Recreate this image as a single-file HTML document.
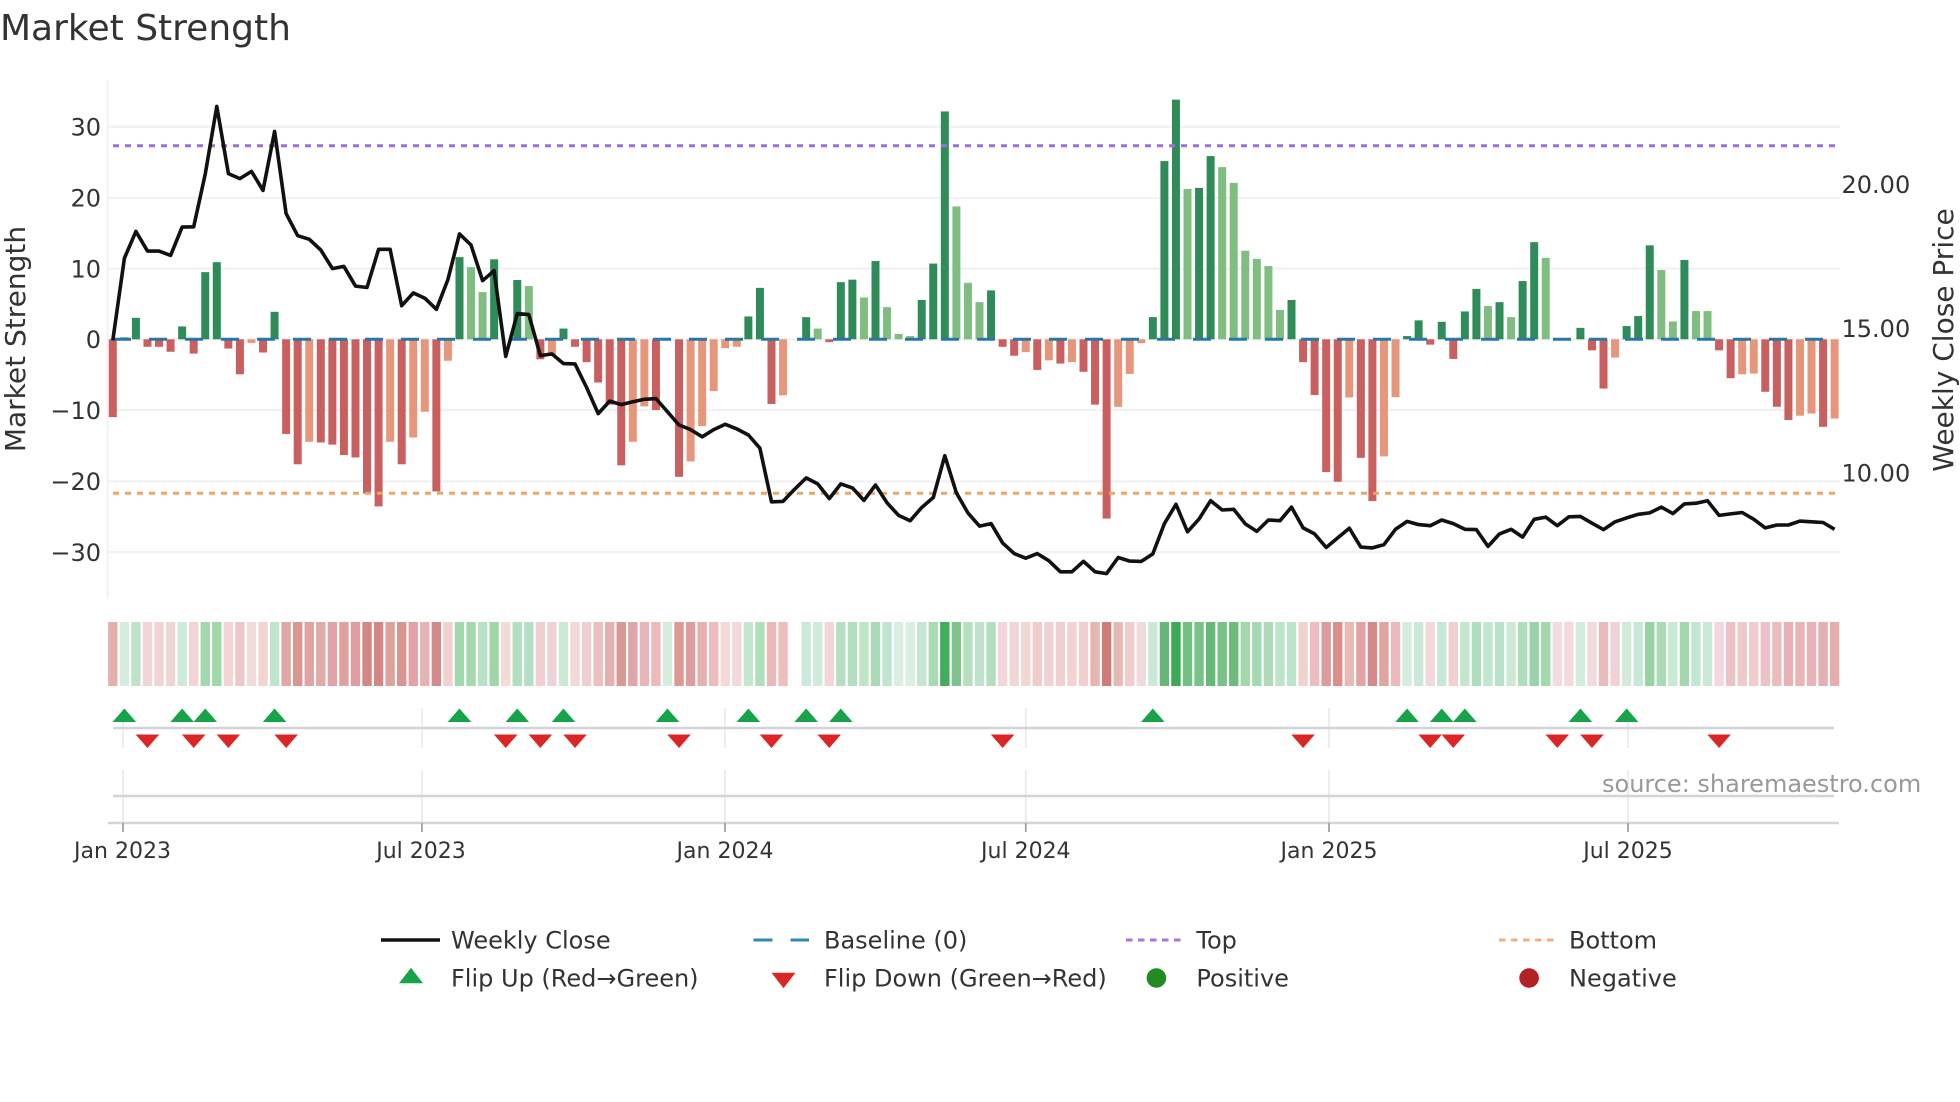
<!DOCTYPE html>
<html>
<head>
<meta charset="utf-8">
<title>Market Strength</title>
<style>
html,body{margin:0;padding:0;background:#fff;width:1960px;height:1102px;overflow:hidden}
svg{display:block}
text{font-family:"DejaVu Sans","Liberation Sans",sans-serif;fill:#333}
</style>
</head>
<body>
<svg id="c" xmlns="http://www.w3.org/2000/svg" width="1960" height="1102" viewBox="0 0 1960 1102">
<rect width="1960" height="1102" fill="#fff"/>
<g id="grid" stroke="#f0f2f5" stroke-width="2.4">
<line x1="108" x2="1840" y1="126.8" y2="126.8"/>
<line x1="108" x2="1840" y1="197.9" y2="197.9"/>
<line x1="108" x2="1840" y1="268.6" y2="268.6"/>
<line x1="108" x2="1840" y1="339.3" y2="339.3"/>
<line x1="108" x2="1840" y1="410" y2="410"/>
<line x1="108" x2="1840" y1="481.4" y2="481.4"/>
<line x1="108" x2="1840" y1="552.1" y2="552.1"/>
</g>
<line x1="107.5" x2="107.5" y1="80" y2="599" stroke="#eff1f4" stroke-width="1.8"/>
<g id="bars"></g>
<line x1="113" x2="1835" y1="339.3" y2="339.3" stroke="#2877a6" stroke-width="3" stroke-dasharray="18 18"/>
<line x1="113" x2="1835" y1="145.7" y2="145.7" stroke="#9d6fdb" stroke-width="3" stroke-dasharray="6 6"/>
<line x1="113" x2="1835" y1="493.2" y2="493.2" stroke="#eca564" stroke-width="3" stroke-dasharray="6 6"/>
<polyline id="close" fill="none" stroke="#111" stroke-width="3.6" stroke-linejoin="round"/>
<g id="heat"></g>
<g stroke="#e9ebef" stroke-width="1.8">
<path d="M123 708V748M123 770V823M421.9 708V748M421.9 770V823M725 708V748M725 770V823M1025.8 708V748M1025.8 770V823M1329 708V748M1329 770V823M1628 708V748M1628 770V823"/>
</g>
<g stroke="#d2d4d9" stroke-width="2.4">
<line x1="113" x2="1834" y1="728" y2="728"/>
<line x1="113" x2="1834" y1="796" y2="796"/>
<line x1="108" x2="1839" y1="823" y2="823"/>
</g>
<path d="M123 823V832M421.9 823V832M725 823V832M1025.8 823V832M1329 823V832M1628 823V832" stroke="#a0a2a6" stroke-width="1.8"/>
<g id="flips"></g>

<text x="0" y="40" font-size="36">Market Strength</text>
<g font-size="24" text-anchor="end">
<text x="101" y="135.7">30</text>
<text x="101" y="206.7">20</text>
<text x="101" y="277.4">10</text>
<text x="101" y="347.9">0</text>
<text x="101" y="418.8">−10</text>
<text x="101" y="490">−20</text>
<text x="101" y="560.9">−30</text>
</g>
<g font-size="24">
<text x="1841.5" y="193">20.00</text>
<text x="1841.5" y="337">15.00</text>
<text x="1841.5" y="481.5">10.00</text>
</g>
<text transform="translate(25 339) rotate(-90)" font-size="28" text-anchor="middle">Market Strength</text>
<text transform="translate(1953 340) rotate(-90)" font-size="28" text-anchor="middle">Weekly Close Price</text>
<g font-size="22" text-anchor="middle">
<text x="122.5" y="858">Jan 2023</text>
<text x="421" y="858">Jul 2023</text>
<text x="725" y="858">Jan 2024</text>
<text x="1025.8" y="858">Jul 2024</text>
<text x="1329" y="858">Jan 2025</text>
<text x="1628" y="858">Jul 2025</text>
</g>
<text x="1602" y="792" font-size="24" style="fill:#999">source: sharemaestro.com</text>

<line x1="381" x2="440" y1="940" y2="940" stroke="#111" stroke-width="3.6"/>
<line x1="753.5" x2="809" y1="940" y2="940" stroke="#3386b8" stroke-width="3" stroke-dasharray="19 18"/>
<line x1="1126" x2="1182" y1="940" y2="940" stroke="#a874e0" stroke-width="3" stroke-dasharray="6.5 5.5"/>
<line x1="1499" x2="1555" y1="940" y2="940" stroke="#eeb084" stroke-width="3" stroke-dasharray="6.5 5.5"/>
<polygon points="399,983.3 411,967.7 423,983.3" fill="#16a34a"/>
<polygon points="771.5,972.7 795.5,972.7 783.5,988.3" fill="#dc2626"/>
<circle cx="1156.4" cy="978" r="9.8" fill="#228b22"/>
<circle cx="1529.1" cy="978" r="9.8" fill="#b22222"/>
<g font-size="24">
<text x="451" y="948.3">Weekly Close</text>
<text x="824" y="948.3">Baseline (0)</text>
<text x="1196.4" y="948.3">Top</text>
<text x="1569" y="948.3">Bottom</text>
<text x="451" y="986.5">Flip Up (Red→Green)</text>
<text x="824" y="986.5">Flip Down (Green→Red)</text>
<text x="1196.4" y="986.5">Positive</text>
<text x="1569" y="986.5">Negative</text>
</g>
</svg>
<script>
(function(){
var NS="http://www.w3.org/2000/svg";
function X(i){return 112.8+i*11.556}
function Y(z){return 60+z/2.8}
function el(p,n,a){var e=document.createElementNS(NS,n);for(var k in a)e.setAttribute(k,a[k]);p.appendChild(e);return e}
var bars="1000R 776g 722G 803R 803R 817R 746G 822R 594G 566G 808R 880R 792r 819R 705G 1047R 1132R 1069r 1071R 1077R 1106R 1113R 1214R 1250R 1069r 1132R 1057r 985r 1208R 842r 552G 580g 650g 558G 0 616G 633g 838R 825r 752G 803R 846R 903R 965R 1135R 1069r 970r 980R 0 1167R 1124r 1025r 927r 807r 803r 718G 638G 963R 939r 0 720G 752g 790R 622G 615G 665g 563G 692g 767g 773g 672G 570G 144G 410g 624g 678g 645G 803R 828R 818r 868R 841r 850R 846r 873R 965R 1284R 971r 879r 793r 720G 283G 111G 361g 358G 269G 300g 344g 534g 557g 577g 700g 672G 846R 938R 1154R 1181R 945r 1114R 1235R 1110r 944r 773G 729G 797R 733G 837R 704G 641G 689g 678G 720g 619G 510G 554g 0 0 750G 813R 920R 833r 745G 717G 519G 588g 732g 560G 703g 703g 813R 891R 880r 878r 929R 971R 1008R 996r 990r 1027R 1004r".split(" ");
var col={G:"#2f8c58",g:"#80bd80",R:"#c95f5f",r:"#e6967a"};
var g=document.getElementById("bars");
var Y0=339.3;
bars.forEach(function(b,i){
  var z=parseFloat(b);if(!z)return;
  var y=Y(z),t=Math.min(y,Y0),h=Math.abs(y-Y0);
  el(g,"rect",{x:(X(i)-4).toFixed(2),y:t.toFixed(2),width:8,height:h.toFixed(2),fill:col[b.slice(-1)]});
});
var line=[785,555,480,535,535,547,468,467,320,130,318,332,312,365,200,430,492,502,532,584,578,633,637,530,530,688,652,667,698,615,487,518,618,590,830,710,713,828,823,850,851,917,990,955,965,957,950,948,985,1022,1035,1055,1035,1020,1033,1050,1087,1237,1236,1202,1170,1187,1228,1187,1198,1233,1190,1240,1275,1290,1253,1225,1108,1212,1268,1305,1298,1352,1382,1395,1382,1402,1433,1433,1404,1433,1438,1393,1403,1404,1383,1298,1244,1321,1285,1234,1260,1258,1299,1320,1288,1290,1252,1310,1327,1365,1338,1311,1364,1366,1357,1314,1292,1301,1304,1288,1298,1314,1315,1362,1327,1314,1336,1286,1280,1304,1279,1278,1297,1315,1293,1282,1272,1268,1252,1270,1243,1241,1234,1275,1271,1267,1286,1310,1302,1302,1291,1293,1295,1314];
document.getElementById("close").setAttribute("points",line.map(function(z,i){return X(i).toFixed(1)+","+Y(z).toFixed(1)}).join(" "));
var heat="e3b0ac d5ecdf bfe3c9 f3d4d6 f1d3d4 efd6d3 cdebd9 f3d3d6 a3d7b0 a0d8a6 f4d4d4 ecc9c8 f1dcdc f1d5d3 bfe5cd e0a7a5 d89791 dfa5a5 e0aaa6 e1a3a9 dea19e e09e9f d28783 d38783 dfa19b d99590 e3a2a7 e6b3b4 d48a8c f2d0ce a3d9ae a6d8ae b8e2c8 a1d7a5 f3dbd7 b0e0bf b3e0c4 f0cfd2 eed3d6 cce9d4 f3d8d8 efcfd4 ecbfbe e5b0b2 da9893 e0a5a9 e8b6b8 ebbab9 d5ecdf dd9a95 de9c9f e7b0af eebcbc f3d9d7 f1d9dc c4e6cf b0dfbb ebb8bb ebbfbc - cbe9d9 d0ebdc f4d6d8 b5dfc0 b2dfbf bfe5c6 acdab9 c0e5ce d7eee0 d9efe0 c4e7d1 a9dab3 42ad5a 80c38c b6dfc0 bfe3cd b2dfbe f1d6dc f0d7d5 f0d7d0 f1ccca f0d0d0 f1cfd0 f2d3d3 f1cfd0 e6b5ae cf7b78 e8b9b2 f0cccc efdbdd cce8d7 65b877 3ca957 72c082 79c288 66b974 78c288 6dbc7c a3d8ad a5d9b3 aedab7 bfe5c9 bde5cc f2d2cf edbcbe dd9c9b db8f8a e8bab6 e3a3a5 d58a88 e2a49f ecbabc d6ecdf cae9d8 f2d8da c8e8d7 f2d0d2 c4e6cf afdebc c2e6cf b9e1cb cde9d4 aedfba 97d3a6 a3d8ac f3dcdf f3dadd d3eddc efdadc e9bcbc f0d2d6 d4ebda c8e8d6 97d4a2 aadbb6 c6ead4 a3d8ad c4e7d4 c9e9d6 f2d7de ecc2c4 f0c9ca f0cccc ecc2c8 ebbcbc e8b1b6 e9b6b5 e7b2b8 e5aeb3 e5aeae".split(" ");
var h=document.getElementById("heat");
heat.forEach(function(c,i){
  if(c==="-")return;
  el(h,"rect",{x:(X(i)-4.7).toFixed(2),y:622,width:9.4,height:64,fill:"#"+c});
});
var f=document.getElementById("flips");
[1,6,8,14,30,35,39,48,55,60,63,90,112,115,117,127,131].forEach(function(i){
  var c=X(i);
  el(f,"polygon",{points:(c-11.8)+",722 "+c+",708.5 "+(c+11.8)+",722",fill:"#16a34a"});
});
[3,7,10,15,34,37,40,49,57,62,77,103,114,116,125,128,139].forEach(function(i){
  var c=X(i);
  el(f,"polygon",{points:(c-11.8)+",734.5 "+(c+11.8)+",734.5 "+c+",748",fill:"#dc2626"});
});
})();
</script>
</body>
</html>
